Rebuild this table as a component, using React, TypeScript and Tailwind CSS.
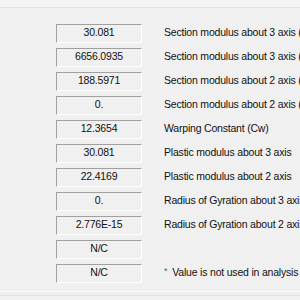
const rows: { value: string; label: string; note?: boolean }[] = [
  { value: "30.081", label: "Section modulus about 3 axis (compression)" },
  { value: "6656.0935", label: "Section modulus about 3 axis (tension)" },
  { value: "188.5971", label: "Section modulus about 2 axis (compression)" },
  { value: "0.", label: "Section modulus about 2 axis (tension)" },
  { value: "12.3654", label: "Warping Constant (Cw)" },
  { value: "30.081", label: "Plastic modulus about 3 axis" },
  { value: "22.4169", label: "Plastic modulus about 2 axis" },
  { value: "0.", label: "Radius of Gyration about 3 axis" },
  { value: "2.776E-15", label: "Radius of Gyration about 2 axis" },
  { value: "N/C", label: "" },
  { value: "N/C", label: "Value is not used in analysis", note: true },
];

export default function App() {
  return (
    <div
      className="w-[300px] h-[300px] overflow-hidden bg-[#f0f0f0] flex flex-col text-[10.5px] tracking-[-0.2px] text-[#111]"
      style={{ fontFamily: '"Liberation Sans", Arial, sans-serif' }}
    >
      {/* top strip */}
      <div className="h-[8px] shrink-0 bg-[#f4f4f4] border-b border-[#e2e2e2]" />

      <div className="flex flex-col pt-[13px]">
        {rows.map((r, i) => (
          <div key={i} className="flex items-center h-[24px] shrink-0 whitespace-nowrap">
            <div className="ml-[56px] w-[86px] h-[19px] shrink-0 flex items-center justify-center border-t border-l border-[#a0a0a0] border-r-white border-b-white border-r border-b">
              {r.value}
            </div>
            <div className="ml-[22px] flex items-center">
              {r.note && <span className="text-[#4a5a9a] text-[9px] mr-[5px] -mt-[3px]">*</span>}
              {r.label}
            </div>
          </div>
        ))}
      </div>

      {/* bottom edge */}
      <div className="mt-auto h-[9px] shrink-0 border-t border-[#fbfbfb] bg-[#f0f0f0]">
        <div className="mt-[3px] border-t border-[#e3e3e3]" />
      </div>
    </div>
  );
}
